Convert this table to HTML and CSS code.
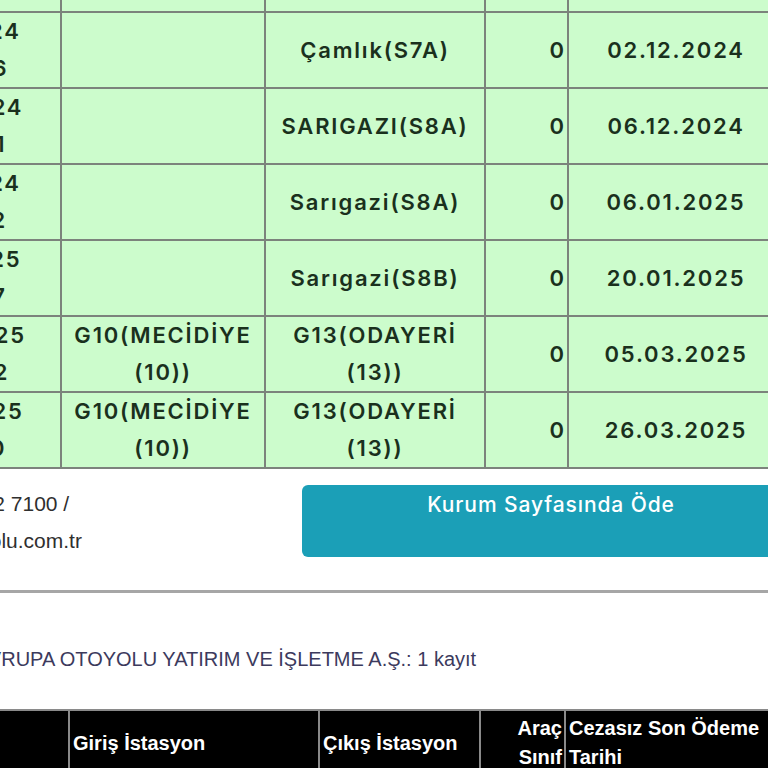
FILE: index.html
```html
<!DOCTYPE html>
<html lang="tr">
<head>
<meta charset="utf-8">
<title>Otoyol İhlalli Geçiş Sorgulama</title>
<link rel="stylesheet" href="styles.css">
</head>
<body>
<main class="page">
  <table class="fines">
    <colgroup>
      <col class="c-date"><col class="c-in"><col class="c-out"><col class="c-cls"><col class="c-due">
    </colgroup>
    <tbody>
      <tr><td class="when">25.11.2024</td><td></td><td>Çamlık(S7A)</td><td class="num">0</td><td>29.11.2024</td></tr>
      <tr><td class="when">28.11.2024<br>13:42:26</td><td></td><td>Çamlık(S7A)</td><td class="num">0</td><td>02.12.2024</td></tr>
      <tr><td class="when">02.12.2024<br>08:15:31</td><td></td><td>SARIGAZI(S8A)</td><td class="num">0</td><td>06.12.2024</td></tr>
      <tr><td class="when">31.12.2024<br>18:27:52</td><td></td><td>Sarıgazi(S8A)</td><td class="num">0</td><td>06.01.2025</td></tr>
      <tr><td class="when">15.01.2025<br>07:53:17</td><td></td><td>Sarıgazi(S8B)</td><td class="num">0</td><td>20.01.2025</td></tr>
      <tr><td class="when">28.02.2025<br>19:04:42</td><td>G10(MECİDİYE (10))</td><td>G13(ODAYERİ (13))</td><td class="num">0</td><td>05.03.2025</td></tr>
      <tr><td class="when">21.03.2025<br>11:36:50</td><td>G10(MECİDİYE (10))</td><td>G13(ODAYERİ (13))</td><td class="num">0</td><td>26.03.2025</td></tr>
    </tbody>
  </table>

  <section class="contact-bar">
    <div class="contact">
      <span class="contact-line">Çağrı Merkezi: (0850) 222 7100 /</span>
      <span class="contact-line">www.kuzeymarmaraotoyolu.com.tr</span>
    </div>
    <a class="pay-btn" href="#">Kurum Sayfasında Öde</a>
  </section>

  <p class="operator">AVRUPA OTOYOLU YATIRIM VE İŞLETME A.Ş.: 1 kayıt</p>

  <table class="fines-head">
    <colgroup>
      <col class="h-date"><col class="h-in"><col class="h-out"><col class="h-cls"><col class="h-due">
    </colgroup>
    <thead>
      <tr>
        <th>Geçiş Tarihi</th>
        <th>Giriş İstasyon</th>
        <th>Çıkış İstasyon</th>
        <th class="num">Araç Sınıf</th>
        <th>Cezasız Son Ödeme Tarihi</th>
      </tr>
    </thead>
  </table>
</main>
</body>
</html>
```

FILE: styles.css
```css
html, body {
  margin: 0;
  padding: 0;
  background: #ffffff;
  height: 768px;
  overflow: hidden;
}

.page {
  width: 768px;
  overflow: hidden;
}

/* green fines table */
.fines {
  border-collapse: collapse;
  table-layout: fixed;
  width: 942px;
  margin: -65px 0 0 -159px;
  background: #ccfccc;
  color: #1a301d;
  font-family: "Inter", "Noto Sans", sans-serif;
  font-weight: 600;
  font-size: 22px;
  line-height: 37px;
  letter-spacing: 1.8px;
}

.fines .c-date { width: 219px; }
.fines .c-in { width: 204px; }
.fines .c-out { width: 220px; }
.fines .c-cls { width: 83px; }
.fines .c-due { width: 216px; }

.fines tr { height: 76px; }

.fines td {
  border: 2px solid #7c837c;
  padding: 0 3px;
  text-align: center;
  vertical-align: middle;
}

.fines td.when {
  padding-left: 9px;
}

.fines td.num {
  text-align: right;
  letter-spacing: 0;
}

/* contact + pay button */
.contact-bar {
  display: flex;
  align-items: flex-start;
  margin-left: -239px;
  padding: 16px 0 31px;
  border-bottom: 3px solid #a6a6a6;
}

.contact {
  flex: 0 0 541px;
  display: flex;
  flex-direction: column;
  font-family: "Liberation Sans", Arial, sans-serif;
  font-size: 21px;
  line-height: 37px;
  color: #2f2f2f;
  white-space: nowrap;
}

.pay-btn {
  flex: 0 0 498px;
  box-sizing: border-box;
  height: 72px;
  padding-top: 4px;
  border-radius: 6px;
  background: #1b9fb7;
  color: #ffffff;
  text-align: center;
  text-decoration: none;
  font-family: "Inter", "Noto Sans", sans-serif;
  font-weight: 500;
  font-size: 21px;
  line-height: 31px;
  letter-spacing: 0.9px;
}

/* operator heading */
.operator {
  margin: 52px 0 0 -24px;
  font-family: "Liberation Sans", Arial, sans-serif;
  font-size: 20px;
  line-height: 29px;
  color: #3c3a5d;
  white-space: nowrap;
}

/* black header table */
.fines-head {
  border-collapse: collapse;
  table-layout: fixed;
  width: 920px;
  margin: 35px 0 0 -150px;
  background: #000000;
  color: #ffffff;
  font-family: "Liberation Sans", Arial, sans-serif;
  font-weight: 700;
  font-size: 20px;
  line-height: 29px;
}

.fines-head .h-date { width: 218px; }
.fines-head .h-in { width: 250px; }
.fines-head .h-out { width: 161px; }
.fines-head .h-cls { width: 85px; }
.fines-head .h-due { width: 206px; }

.fines-head th {
  border: 2px solid #8a8a8a;
  padding: 3px 2px 8px 3px;
  text-align: left;
  vertical-align: middle;
  font-weight: 700;
}

.fines-head th.num {
  text-align: right;
}
```
